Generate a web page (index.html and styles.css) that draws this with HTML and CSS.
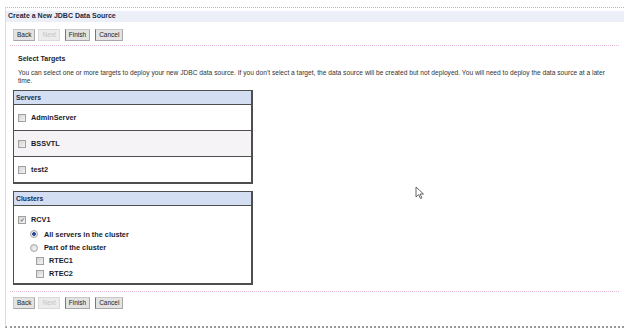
FILE: index.html
```html
<!DOCTYPE html>
<html>
<head>
<meta charset="utf-8">
<link rel="stylesheet" href="styles.css">
</head>
<body>
<div class="frame">
  <div class="title">Create a New JDBC Data Source</div>
  <div class="btnrow">
    <span class="btn">Back</span>
    <span class="btn disabled">Next</span>
    <span class="btn mark">Finish</span>
    <span class="btn mark">Cancel</span>
  </div>
  <div class="sep"></div>
  <div class="content">
    <div class="heading">Select Targets</div>
    <p class="desc">You can select one or more targets to deploy your new JDBC data source. If you don't select a target, the data source will be created but not deployed. You will need to deploy the data source at a later time.</p>
    <div class="panel servers">
      <div class="phead">Servers</div>
      <div class="srow"><span class="cb"></span><span class="lbl">AdminServer</span></div>
      <div class="srow alt"><span class="cb"></span><span class="lbl">BSSVTL</span></div>
      <div class="srow"><span class="cb"></span><span class="lbl">test2</span></div>
    </div>
    <div class="panel clusters">
      <div class="phead">Clusters</div>
      <div class="cbody">
        <div class="crow r1"><span class="cb checked">&#10003;</span><span class="lbl">RCV1</span></div>
        <div class="crow r2 lvl1"><span class="rb on"></span><span class="lbl">All servers in the cluster</span></div>
        <div class="crow lvl1"><span class="rb"></span><span class="lbl">Part of the cluster</span></div>
        <div class="crow lvl2"><span class="cb"></span><span class="lbl">RTEC1</span></div>
        <div class="crow lvl2"><span class="cb"></span><span class="lbl">RTEC2</span></div>
      </div>
    </div>
  </div>
  <div class="sep last"></div>
  <div class="btnrow bottom">
    <span class="btn">Back</span>
    <span class="btn disabled">Next</span>
    <span class="btn mark">Finish</span>
    <span class="btn mark">Cancel</span>
  </div>
</div>
<svg class="cursor" width="10" height="14" viewBox="0 0 10 14"><path d="M1 1 L1 11 L3.5 8.5 L5.5 12.5 L7 11.8 L5 8 L8.5 8 Z" fill="#fff" stroke="#555" stroke-width="0.9"/></svg>
</body>
</html>
```

FILE: styles.css
```css
html, body {
  margin: 0;
  padding: 0;
  background: #fff;
}
body {
  font-family: "Liberation Sans", Arial, sans-serif;
  color: #222;
  width: 628px;
  height: 335px;
  position: relative;
  overflow: hidden;
}
.frame {
  margin: 7px 4px 0 5px;
  height: 321px;
  border-left: 1px solid #dcdcdc;
  border-top: 1px dotted #b8b8b8;
  border-bottom: 2px dotted #9a9a9a;
  box-sizing: border-box;
}
.title {
  margin-top: 3px;
  height: 11px;
  line-height: 10px;
  padding-left: 2px;
  font-size: 7px;
  font-weight: bold;
  color: #1c2a44;
  background: #eceff7;
}
.btnrow {
  display: flex;
  gap: 3px;
  padding: 7px 0 0 7px;
  height: 12px;
}
.btnrow.bottom {
  padding-top: 5px;
}
.btn {
  height: 10px;
  line-height: 10px;
  padding: 0 3px;
  font-size: 6.5px;
  color: #222;
  background: #e3e3e3;
  border: 1px solid #c8c8c8;
  border-right-color: #a8a8a8;
  border-bottom-color: #a8a8a8;
}
.btn.disabled {
  color: #c4c4c4;
  background: #ececec;
  border-color: #dadada;
}
.btn.mark {
  border-left: 1px solid #777;
  margin-left: 2px;
}
.sep {
  margin: 4px 5px 0 4px;
  border-top: 1px dotted #e8b8d8;
}
.sep.last {
  margin-top: 6px;
}
.content {
  padding: 0 0 0 7px;
}
.heading {
  margin: 8px 0 0 5px;
  font-size: 7px;
  font-weight: bold;
  color: #1c1c2c;
  line-height: 10px;
}
.desc {
  margin: 5px 0 0 5px;
  width: 595px;
  font-size: 6.65px;
  line-height: 8px;
  color: #333;
}
.panel {
  width: 240px;
  box-sizing: border-box;
  border: 1px solid #4e4e4e;
  border-right-width: 2px;
  border-bottom-width: 2px;
}
.servers {
  margin-top: 5px;
}
.clusters {
  margin-top: 7px;
}
.phead {
  height: 13px;
  line-height: 13px;
  padding-left: 2px;
  font-size: 6.8px;
  font-weight: bold;
  color: #1a2a4a;
  background: #d3def3;
  border-bottom: 1px solid #4e4e4e;
}
.srow {
  height: 25px;
  display: flex;
  align-items: center;
  padding-left: 4px;
  border-bottom: 1px solid #4e4e4e;
}
.srow:last-child {
  border-bottom: none;
}
.srow.alt {
  background: #f6f3f6;
}
.lbl {
  font-size: 7.3px;
  font-weight: bold;
  color: #1a1a2a;
}
.cb {
  width: 6px;
  height: 6px;
  border: 1px solid #a0a0a0;
  background: linear-gradient(135deg, #d4d4d4, #f4f4f4);
  margin-right: 5px;
  font-size: 6px;
  line-height: 6px;
  text-align: center;
  color: #334;
  display: inline-block;
}
.rb {
  width: 6px;
  height: 6px;
  border-radius: 50%;
  border: 1px solid #a8a8a8;
  background: radial-gradient(circle at 60% 60%, #f4f4f4, #cfcfcf);
  margin-right: 6px;
  display: inline-block;
}
.rb.on {
  background: radial-gradient(circle, #2f4f9f 0 1.6px, #e8e8e8 2px);
}
.cbody {
  padding: 6px 0 3px 4px;
}
.crow {
  height: 13px;
  display: flex;
  align-items: center;
}
.crow.r1 {
  height: 15px;
}
.crow.r2 {
  height: 14px;
}
.crow.lvl1 {
  padding-left: 12px;
}
.crow.lvl2 {
  padding-left: 18px;
}
.cursor {
  position: absolute;
  left: 415px;
  top: 186px;
}
```
